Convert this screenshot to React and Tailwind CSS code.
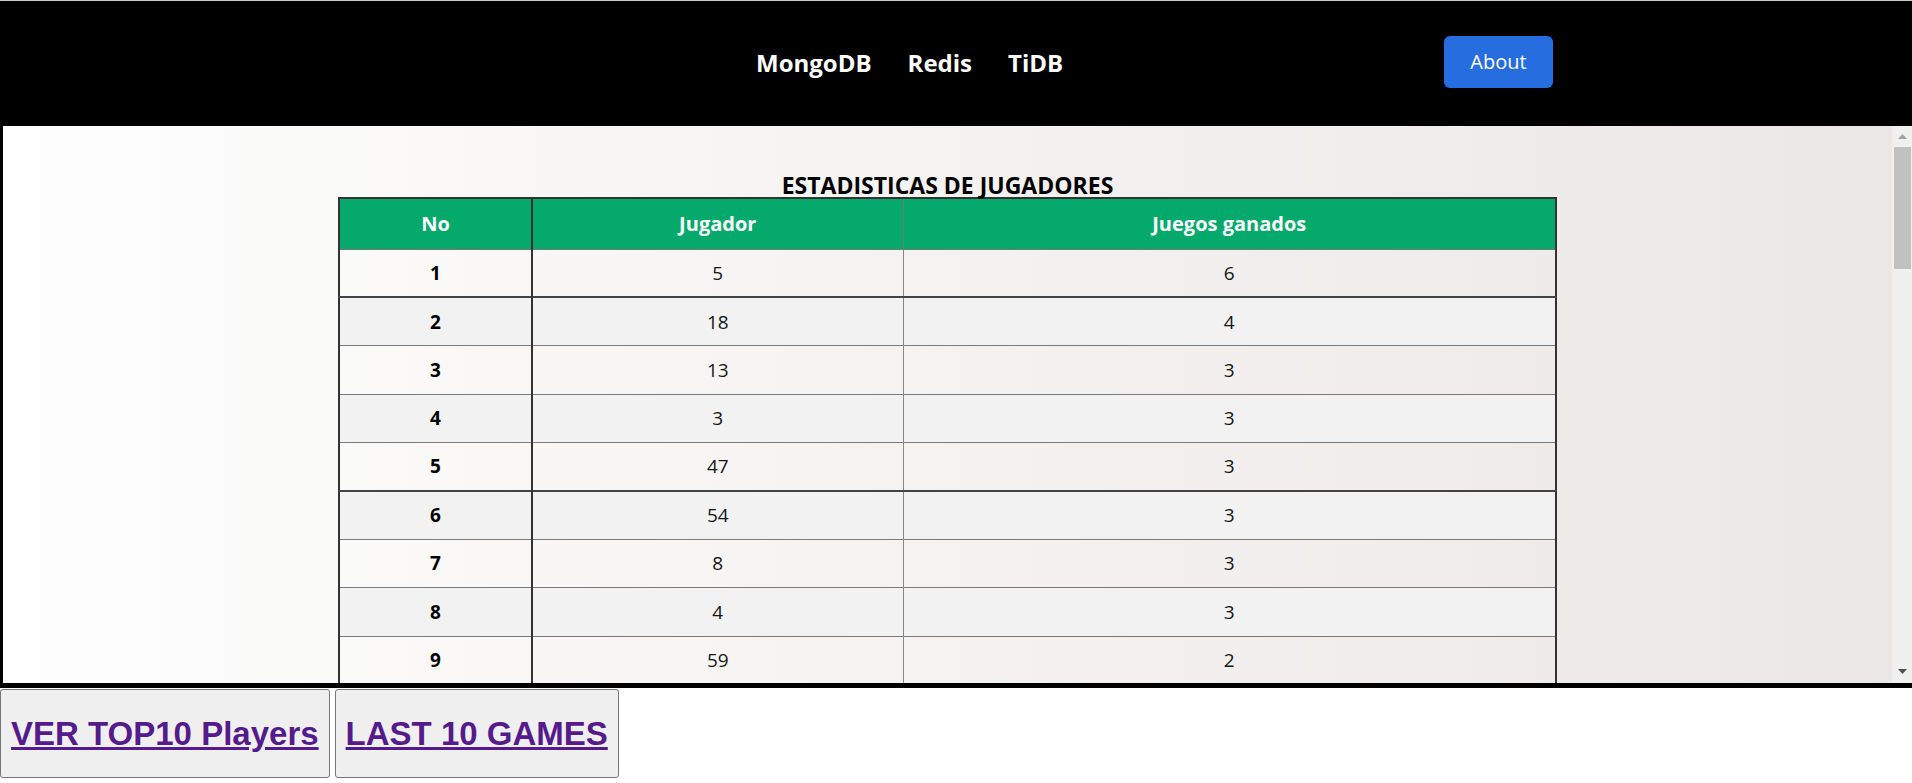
import React from 'react';

const players = [
  { no: 1, jugador: 5, ganados: 6 },
  { no: 2, jugador: 18, ganados: 4 },
  { no: 3, jugador: 13, ganados: 3 },
  { no: 4, jugador: 3, ganados: 3 },
  { no: 5, jugador: 47, ganados: 3 },
  { no: 6, jugador: 54, ganados: 3 },
  { no: 7, jugador: 8, ganados: 3 },
  { no: 8, jugador: 4, ganados: 3 },
  { no: 9, jugador: 59, ganados: 2 },
];

const Scrollbar = () => (
  <div className="flex w-5 shrink-0 flex-col bg-[#f0f0f0]">
    <div className="flex h-5 items-center justify-center pt-px">
      <svg width="9" height="5" viewBox="0 0 9 5">
        <path d="M4.5 0L9 5H0z" fill="#a3a3a3" />
      </svg>
    </div>
    <div className="ml-[2px] mr-px mt-px h-[122px] bg-[#c1c1c1]" />
    <div className="flex-1" />
    <div className="flex h-5 items-center justify-center pb-[3px]">
      <svg width="9" height="5" viewBox="0 0 9 5">
        <path d="M0 0H9L4.5 5z" fill="#505050" />
      </svg>
    </div>
  </div>
);

const StatsTable = () => (
  <table className="mx-auto w-[1219px] border-collapse border-2 border-[#333] border-b-[#7a7a7a] text-[19px]">
    <thead>
      <tr className="h-[51px] bg-[#05a96c] text-[20px] font-bold text-white">
        <th className="w-[193px] border-r-2 border-b border-[#333] border-b-[#777]">No</th>
        <th className="w-[371px] border-r border-b border-[#777]">Jugador</th>
        <th className="border-b border-[#777]">Juegos ganados</th>
      </tr>
    </thead>
    <tbody>
      {players.map((p, i) => {
        const dark = i === 0 || i === 4;
        return (
          <tr
            key={p.no}
            className={`h-[48.4px] ${i % 2 === 1 ? 'bg-[#f2f2f2]' : ''} ${
              dark ? 'border-b-2 border-[#444]' : 'border-b border-[#7a7a7a]'
            }`}
          >
            <td className="border-r-2 border-[#333] text-center font-bold text-black">{p.no}</td>
            <td className="border-r border-[#888] text-center text-[#161616]">{p.jugador}</td>
            <td className="text-center text-[#161616]">{p.ganados}</td>
          </tr>
        );
      })}
    </tbody>
  </table>
);

const App = () => {
  return (
    <div className="min-h-screen bg-white font-['Open_Sans',sans-serif]">
      {/* Top navbar */}
      <header className="flex h-[126px] items-center border-t border-[#c9c9c9] bg-black">
        <nav className="mb-[2px] ml-[756px] flex w-[688px] items-center gap-9 text-[24px] font-bold text-white">
          <a href="#">MongoDB</a>
          <a href="#">Redis</a>
          <a href="#">TiDB</a>
        </nav>
        <button className="mb-[3px] h-[52px] w-[109px] rounded-md bg-[#266de0] text-[20px] text-white">
          About
        </button>
      </header>

      {/* Embedded stats frame */}
      <div className="flex h-[562px] border-b-[5px] border-l-[3px] border-black">
        <div className="flex-1 overflow-hidden bg-linear-to-r from-[#fefefe] to-[#ebe7e4] pt-[47px]">
          <h2 className="text-center text-[23px] font-bold leading-[24px] text-black">
            ESTADISTICAS DE JUGADORES
          </h2>
          <StatsTable />
        </div>
        <Scrollbar />
      </div>

      {/* Bottom links */}
      <div className="mt-px flex gap-[5px] font-['Liberation_Sans',Arial,sans-serif]">
        <button className="h-[89px] rounded-[3px] border border-[#767676] bg-[#efefef] px-[10px]">
          <a href="#" className="text-[33px] font-bold text-[#551a8b] underline">
            VER TOP10 Players
          </a>
        </button>
        <button className="h-[89px] rounded-[3px] border border-[#767676] bg-[#efefef] px-[10px]">
          <a href="#" className="text-[33px] font-bold text-[#551a8b] underline">
            LAST 10 GAMES
          </a>
        </button>
      </div>
    </div>
  );
};

export default App;
